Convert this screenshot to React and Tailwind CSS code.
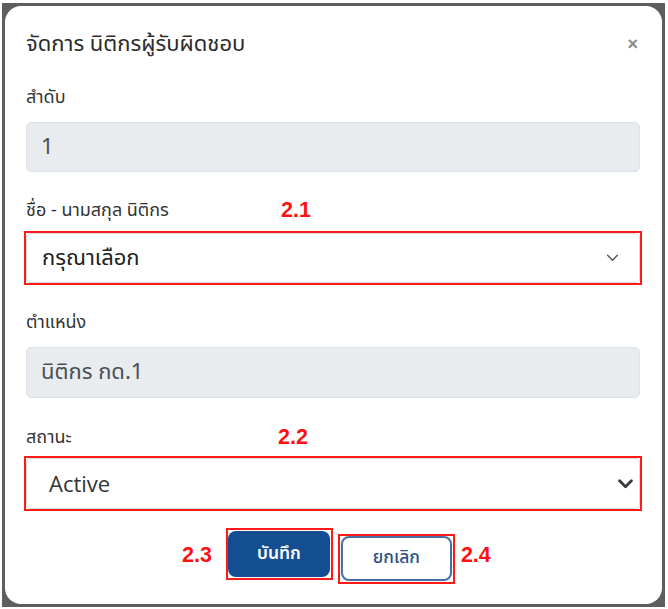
import React from "react";

const thai = { fontFamily: '"Noto Sans Thai", "Noto Sans", "Liberation Sans", sans-serif' };
const mark = { fontFamily: '"Liberation Sans", Arial, sans-serif' };

const Chevron = ({ bold }) => (
  <svg
    width={bold ? 15 : 13}
    height={bold ? 10 : 8}
    viewBox="0 0 14 9"
    fill="none"
    stroke={bold ? "#343a40" : "#495057"}
    strokeWidth={bold ? 2.6 : 1.5}
    strokeLinecap="round"
    strokeLinejoin="round"
  >
    <path d="M1.5 1.5 L7 7 L12.5 1.5" />
  </svg>
);

const Label = ({ children, num, numLeft }) => (
  <div className="h-[30px] flex items-center text-[18px] text-[#333]">
    <span className="w-[255px]">{children}</span>
    {num && (
      <span
        className="text-[21.5px] font-bold text-[#ff1010]"
        style={{ ...mark, marginLeft: numLeft }}
      >
        {num}
      </span>
    )}
  </div>
);

const ReadOnly = ({ value, h }) => (
  <div
    className={`${h} rounded-[5px] border border-[#dee2e6] bg-[#e9ecef] px-[14px] flex items-center text-[22px] text-[#4a4f55]`}
  >
    {value}
  </div>
);

export default function App() {
  return (
    <div className="w-[668px] h-[609px] bg-white pt-[3px] pl-[2px]" style={thai}>
      <div className="w-[663px] h-[604px] bg-[#5e5e5e] p-[3px]">
        <div className="h-full bg-white rounded-[16px] pl-[21px] pr-[22px]">
          {/* header */}
          <div className="h-[76px] flex items-center justify-between">
            <h2 className="text-[22px] text-[#2b2b2b] font-normal">จัดการ นิติกรผู้รับผิดชอบ</h2>
            <span className="mr-[2px] text-[18px] font-bold text-[#8a8a8a]" style={mark}>×</span>
          </div>

          <Label>สำดับ</Label>
          <div className="mt-[10px]">
            <ReadOnly value="1" h="h-[50px]" />
          </div>

          <div className="mt-[23px]">
            <Label num="2.1" numLeft="0px">ชื่อ - นามสกุล นิติกร</Label>
          </div>
          <div className="mt-[6px] -mx-[2px] h-[54px] border-2 border-[#ff1a1a]">
            <div className="h-full rounded-[5px] border border-[#d8dce0] bg-white pl-[15px] pr-[20px] flex items-center justify-between text-[22px] text-[#222]">
              <span>กรุณาเลือก</span>
              <Chevron />
            </div>
          </div>

          <div className="mt-[22px]">
            <Label>ตำแหน่ง</Label>
          </div>
          <div className="mt-[10px]">
            <ReadOnly value="นิติกร กด.1" h="h-[51px]" />
          </div>

          <div className="mt-[24px]">
            <Label num="2.2" numLeft="-3px">สถานะ</Label>
          </div>
          <div className="mt-[4px] -mx-[2px] h-[55px] border-2 border-[#ff1a1a]">
            <div className="h-full rounded-[5px] border border-[#d8dce0] bg-white pl-[22px] pr-[6px] flex items-center justify-between text-[22px] text-[#333]">
              <span style={{ fontFamily: '"Open Sans", "Noto Sans", sans-serif' }}>Active</span>
              <Chevron bold />
            </div>
          </div>

          {/* buttons */}
          <div className="mt-[17px] h-[55px] flex items-center pl-[156px]">
            <span className="text-[21.5px] font-bold text-[#ff1010]" style={mark}>2.3</span>
            <div className="ml-[14px] mb-[3px] w-[107px] h-[52px] border-2 border-[#ff1a1a] flex items-center justify-start">
              <button className="w-[102px] h-[46px] rounded-[8px] bg-[#134e92] text-white text-[17.5px] font-semibold">
                บันทึก
              </button>
            </div>
            <div className="ml-[5px] mt-[7px] w-[117px] h-[50px] border-2 border-[#ff1a1a] flex items-start justify-center">
              <button className="w-[111px] h-[45px] rounded-[8px] border-2 border-[#4a6fa5] bg-white text-[#2d4f86] text-[17.5px] font-medium">
                ยกเลิก
              </button>
            </div>
            <span className="ml-[6px] text-[21.5px] font-bold text-[#ff1010]" style={mark}>2.4</span>
          </div>
        </div>
      </div>
    </div>
  );
}
